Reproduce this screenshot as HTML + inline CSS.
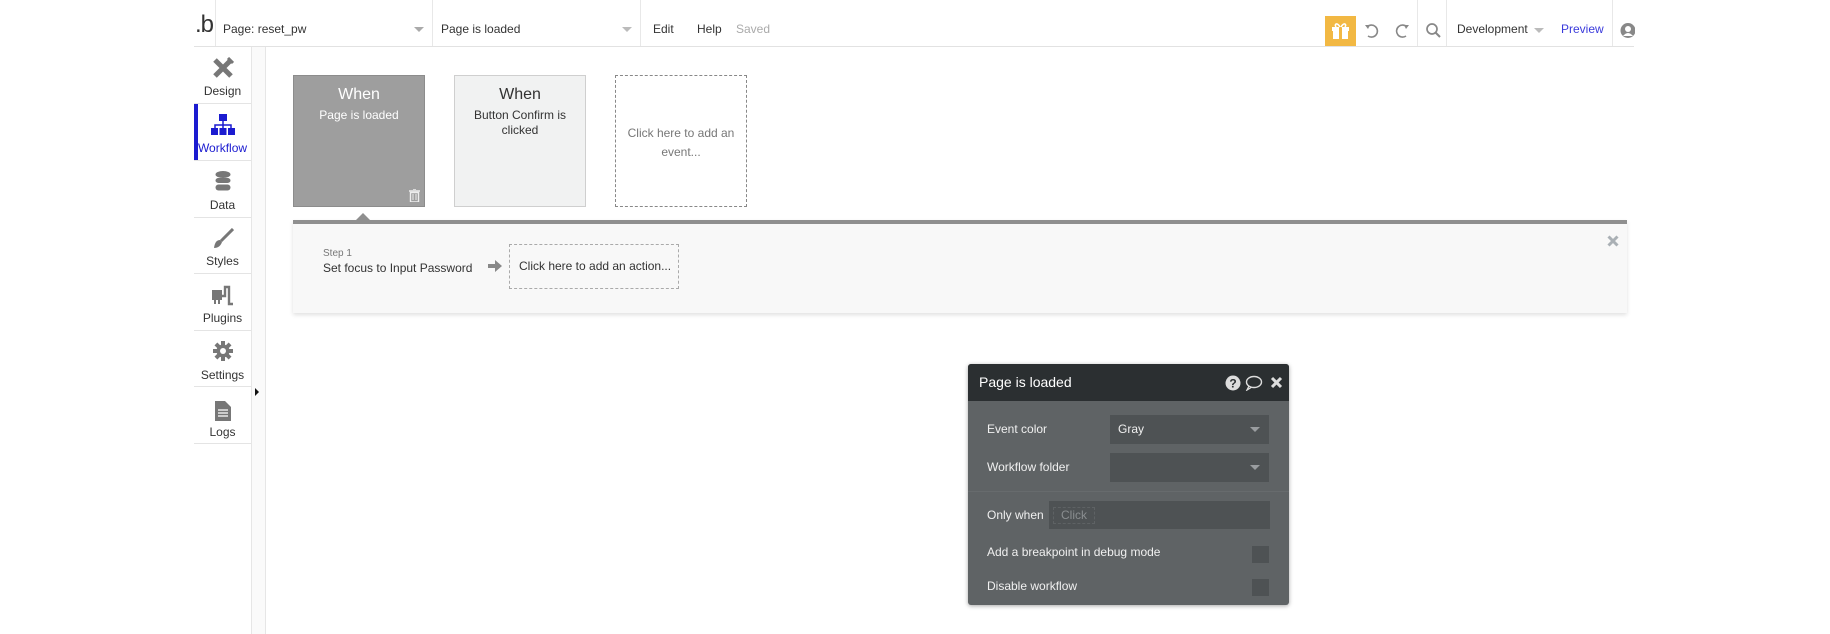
<!DOCTYPE html>
<html><head><meta charset="utf-8"><style>
*{box-sizing:border-box;margin:0;padding:0}
body{width:1830px;height:634px;background:#fff;font-family:"Liberation Sans",sans-serif;color:#333;position:relative;overflow:hidden;font-size:12px}
.a{position:absolute}
.t{position:absolute;white-space:nowrap}
.vs{position:absolute;top:0;width:1px;height:46px;background:#e8e8e8}
.side .lab{position:absolute;left:194px;width:57px;text-align:center;font-size:12px;color:#333}
.side .sep{position:absolute;left:194px;width:57px;height:1px;background:#e4e4e4}
.card{position:absolute;top:75px;width:132px;height:132px;text-align:center}
.card .w{margin-top:10px;font-size:16px}
.card .s{margin-top:4px;font-size:12px;line-height:15px;padding:0 10px}
.row{position:absolute;left:987px;font-size:12px;color:#f0f0f0}
.sel{position:absolute;left:1110px;width:159px;height:29px;background:#4e5254}
.sel .ar{position:absolute;right:9px;top:12px;width:0;height:0;border-left:5px solid transparent;border-right:5px solid transparent;border-top:5px solid #9a9da0}
.cb{position:absolute;left:1252px;width:17px;height:17px;background:#4e5254}
</style></head><body>
<!-- top bar -->
<div class="a" style="left:194px;top:46px;width:1440px;height:1px;background:#e2e2e2"></div>
<div class="t" style="left:195px;top:13px;font-size:24px;color:#333;line-height:24px;letter-spacing:-1px">.b</div>
<div class="vs" style="left:215px"></div>
<div class="t" style="left:223px;top:22px;font-size:12px">Page: reset_pw</div>
<div class="a" style="left:414px;top:27px;border-left:5px solid transparent;border-right:5px solid transparent;border-top:5px solid #aaa"></div>
<div class="vs" style="left:432px"></div>
<div class="t" style="left:441px;top:22px;font-size:12px">Page is loaded</div>
<div class="a" style="left:622px;top:27px;border-left:5px solid transparent;border-right:5px solid transparent;border-top:5px solid #bbb"></div>
<div class="vs" style="left:640px"></div>
<div class="t" style="left:653px;top:22px;font-size:12px">Edit</div>
<div class="t" style="left:697px;top:22px;font-size:12px">Help</div>
<div class="t" style="left:736px;top:22px;font-size:12px;color:#aaa">Saved</div>
<div class="a" style="left:1325px;top:16px;width:31px;height:30px;background:#f2b843"></div>
<svg class="a" style="left:1330px;top:20px" width="21" height="21" viewBox="0 0 21 21"><rect x="2" y="7" width="17" height="4" fill="#fff"/><rect x="3" y="11" width="15" height="8" fill="#fff"/><rect x="9" y="7" width="3" height="12" fill="#f2b843"/><path d="M10 7C7 2 4 4 6 7M11 7C14 2 17 4 15 7" stroke="#fff" stroke-width="1.6" fill="none"/></svg>
<svg class="a" style="left:1363px;top:22px" width="18" height="18" viewBox="0 0 18 18"><path d="M4 5A6 6 0 1 1 5 14" stroke="#888" stroke-width="1.6" fill="none"/><path d="M2 3L5 7 7 3Z" fill="#888"/></svg>
<svg class="a" style="left:1393px;top:22px" width="18" height="18" viewBox="0 0 18 18"><path d="M14 5A6 6 0 1 0 13 14" stroke="#888" stroke-width="1.6" fill="none"/><path d="M16 3L13 7 11 3Z" fill="#888"/></svg>
<div class="vs" style="left:1417px"></div>
<svg class="a" style="left:1425px;top:22px" width="17" height="17" viewBox="0 0 17 17"><circle cx="7" cy="7" r="5" stroke="#888" stroke-width="1.7" fill="none"/><path d="M10.5 10.5L15 15" stroke="#888" stroke-width="2"/></svg>
<div class="vs" style="left:1446px"></div>
<div class="t" style="left:1457px;top:22px;font-size:12px">Development</div>
<div class="a" style="left:1534px;top:28px;border-left:5px solid transparent;border-right:5px solid transparent;border-top:5px solid #bbb"></div>
<div class="t" style="left:1561px;top:22px;font-size:12px;color:#3a3adb">Preview</div>
<div class="vs" style="left:1612px"></div>
<svg class="a" style="left:1620px;top:22px" width="15" height="17" viewBox="0 0 15 17"><circle cx="8" cy="8.5" r="7.5" fill="#888"/><circle cx="8" cy="7" r="3" fill="#fff"/><path d="M3 14Q8 8 13 14Z" fill="#fff"/></svg>

<!-- sidebar -->
<div class="side">
<div class="a" style="left:251px;top:47px;width:1px;height:587px;background:#e6e6e6"></div>
<div class="a" style="left:252px;top:47px;width:13px;height:587px;background:#fafafa"></div>
<div class="a" style="left:265px;top:47px;width:1px;height:587px;background:#e6e6e6"></div>
<div class="a" style="left:194px;top:104px;width:4px;height:56px;background:#1b1bd0"></div>
<svg class="a" style="left:212px;top:57px" width="22" height="22" viewBox="0 0 22 22"><path d="M3 3L19 19M19 3L3 19" stroke="#777" stroke-width="5"/><path d="M16 1L21 6" stroke="#777" stroke-width="3"/></svg>
<div class="lab" style="top:84px">Design</div><div class="sep" style="top:103px"></div>
<svg class="a" style="left:211px;top:114px" width="24" height="22" viewBox="0 0 24 22"><rect x="8" y="0" width="8" height="7" fill="#1b1bd0"/><path d="M12 7V11M4 15V11H20V15M12 11V15" stroke="#1b1bd0" stroke-width="1.5" fill="none"/><rect x="0" y="14" width="7" height="7" fill="#1b1bd0"/><rect x="8.5" y="14" width="7" height="7" fill="#1b1bd0"/><rect x="17" y="14" width="7" height="7" fill="#1b1bd0"/></svg>
<div class="lab" style="top:141px;color:#1b1bd0">Workflow</div><div class="sep" style="top:160px"></div>
<svg class="a" style="left:215px;top:171px" width="16" height="20" viewBox="0 0 16 20"><ellipse cx="8" cy="3.5" rx="7.5" ry="3.5" fill="#777"/><rect x="0.5" y="7" width="15" height="5" rx="3" fill="#777"/><rect x="0.5" y="13.5" width="15" height="6" rx="3" fill="#777"/></svg>
<div class="lab" style="top:198px">Data</div><div class="sep" style="top:217px"></div>
<svg class="a" style="left:212px;top:228px" width="22" height="22" viewBox="0 0 22 22"><path d="M21 1L9 13" stroke="#777" stroke-width="3"/><path d="M8 12Q3 12 2 20Q8 20 10 14Z" fill="#777"/></svg>
<div class="lab" style="top:254px">Styles</div><div class="sep" style="top:273px"></div>
<svg class="a" style="left:211px;top:284px" width="24" height="22" viewBox="0 0 24 22"><rect x="1" y="6" width="10" height="10" fill="#777"/><rect x="3" y="16" width="2" height="4" fill="#777"/><rect x="7" y="16" width="2" height="4" fill="#777"/><path d="M11 12H14V3H18V20H22" stroke="#777" stroke-width="2.4" fill="none"/></svg>
<div class="lab" style="top:311px">Plugins</div><div class="sep" style="top:330px"></div>
<svg class="a" style="left:213px;top:341px" width="20" height="20" viewBox="0 0 20 20"><g fill="#777"><circle cx="10" cy="10" r="6.5"/><rect x="8" y="0" width="4" height="20"/><rect x="0" y="8" width="20" height="4"/><rect x="8" y="0" width="4" height="20" transform="rotate(45 10 10)"/><rect x="8" y="0" width="4" height="20" transform="rotate(-45 10 10)"/></g><circle cx="10" cy="10" r="3" fill="#fff"/></svg>
<div class="lab" style="top:368px">Settings</div><div class="sep" style="top:386px"></div>
<svg class="a" style="left:215px;top:401px" width="16" height="20" viewBox="0 0 16 20"><path d="M0 0H10L16 6V20H0Z" fill="#777"/><path d="M3 9H13M3 12H13M3 15H13" stroke="#fff" stroke-width="1.3"/></svg>
<div class="lab" style="top:425px">Logs</div><div class="sep" style="top:443px"></div>
<div class="a" style="left:255px;top:388px;border-top:4px solid transparent;border-bottom:4px solid transparent;border-left:4px solid #111"></div>
</div>

<!-- cards -->
<div class="card" style="left:293px;background:#9e9e9e;border:1px solid #8c8c8c;color:#fff"><div class="w">When</div><div class="s">Page is loaded</div></div>
<svg class="a" style="left:409px;top:189px" width="11" height="13" viewBox="0 0 11 13"><path d="M0 2H11M4 0H7" stroke="#eee" stroke-width="1.4"/><path d="M1.5 3.5H9.5V13H1.5Z" fill="none" stroke="#eee" stroke-width="1.4"/><path d="M4 5V11M7 5V11" stroke="#eee" stroke-width="1"/></svg>
<div class="card" style="left:454px;background:#f1f2f2;border:1px solid #cfcfcf;color:#333"><div class="w">When</div><div class="s">Button Confirm is clicked</div></div>
<div class="card" style="left:615px;border:1px dashed #888;color:#777"><div class="s" style="margin-top:48px;line-height:19px">Click here to add an event...</div></div>

<!-- step panel -->
<div class="a" style="left:293px;top:220px;width:1334px;height:93px;background:#f8f8f8;border-top:4px solid #8f8f8f;box-shadow:0 2px 4px rgba(0,0,0,.12)"></div>
<div class="a" style="left:356px;top:213px;border-left:7px solid transparent;border-right:7px solid transparent;border-bottom:7px solid #8f8f8f"></div>
<div class="t" style="left:323px;top:248px;font-size:10px;color:#777">Step 1</div>
<div class="t" style="left:323px;top:261px;font-size:12px;color:#333">Set focus to Input Password</div>
<svg class="a" style="left:488px;top:260px" width="14" height="12" viewBox="0 0 14 12"><path d="M0 4H7V0L14 6 7 12V8H0Z" fill="#888"/></svg>
<div class="a" style="left:509px;top:244px;width:170px;height:45px;border:1px dashed #aaa"></div>
<div class="t" style="left:519px;top:259px;font-size:12px;color:#333">Click here to add an action...</div>
<svg class="a" style="left:1607px;top:235px" width="12" height="12" viewBox="0 0 12 12"><path d="M1.5 1.5L10.5 10.5M10.5 1.5L1.5 10.5" stroke="#aab0b5" stroke-width="3"/></svg>

<!-- popup -->
<div class="a" style="left:968px;top:364px;width:321px;height:241px;background:#5f6365;border-radius:3px;box-shadow:0 1px 4px rgba(0,0,0,.35);overflow:hidden">
<div style="height:37px;background:#2b2f31"></div>
<div style="position:absolute;left:0;top:127px;width:321px;height:1px;background:#676b6d"></div>
</div>
<div class="t" style="left:979px;top:374px;font-size:14px;color:#fff">Page is loaded</div>
<svg class="a" style="left:1225px;top:375px" width="62" height="16" viewBox="0 0 62 16"><circle cx="8" cy="8" r="7.5" fill="#ddd"/><text x="8" y="12.5" font-size="12" font-weight="bold" text-anchor="middle" fill="#2b2f31" font-family="Liberation Sans">?</text><ellipse cx="29" cy="7" rx="7.5" ry="5.5" fill="none" stroke="#ddd" stroke-width="1.4"/><path d="M24 11L22 15 27 12" fill="none" stroke="#ddd" stroke-width="1.3"/><path d="M47 3L56 12M56 3L47 12" stroke="#ddd" stroke-width="3"/></svg>
<div class="row" style="top:422px">Event color</div>
<div class="sel" style="top:415px"><span style="position:absolute;left:8px;top:7px;font-size:12px;color:#f0f0f0">Gray</span><div class="ar"></div></div>
<div class="row" style="top:460px">Workflow folder</div>
<div class="sel" style="top:453px"><div class="ar"></div></div>
<div class="row" style="top:508px">Only when</div>
<div class="a" style="left:1049px;top:501px;width:221px;height:28px;background:#4e5254"></div>
<div class="a" style="left:1053px;top:507px;width:42px;height:17px;border:1px dashed #5e6264"></div>
<div class="t" style="left:1061px;top:508px;font-size:12px;color:#8a8e90">Click</div>
<div class="row" style="top:545px">Add a breakpoint in debug mode</div>
<div class="cb" style="top:546px"></div>
<div class="row" style="top:579px">Disable workflow</div>
<div class="cb" style="top:579px"></div>
</body></html>
